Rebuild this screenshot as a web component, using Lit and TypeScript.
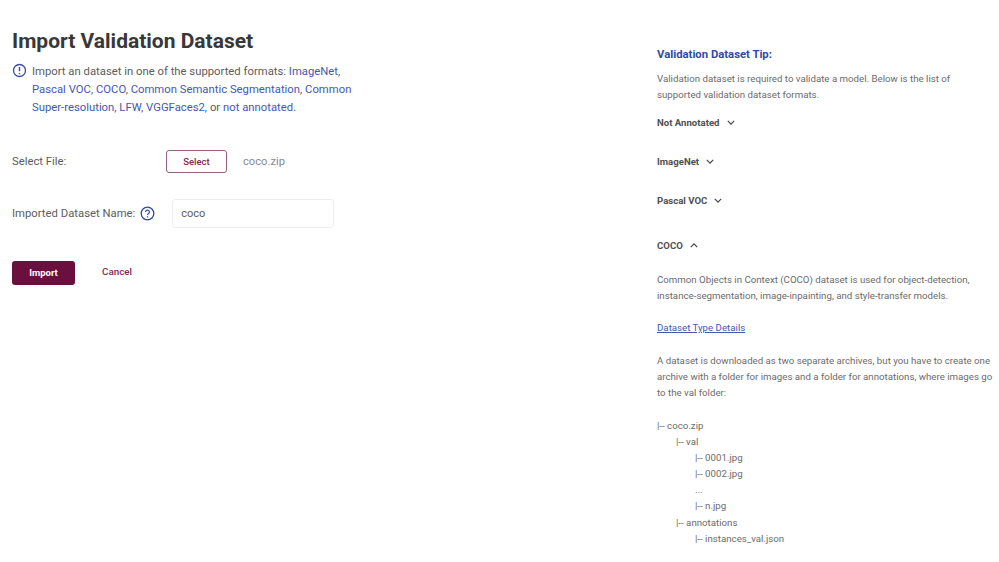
import { LitElement, html, css } from "lit";
import { customElement } from "lit/decorators.js";

const chevron = (up: boolean) => html`<svg class="chev" viewBox="0 0 10 6" width="8" height="5" aria-hidden="true"><path d=${up ? "M1 5l4-4 4 4" : "M1 1l4 4 4-4"} fill="none" stroke="#444" stroke-width="1.5"/></svg>`;

@customElement("app-root")
export class AppRoot extends LitElement {
  static styles = css`
    :host { display: block; height: 562px; overflow: hidden; background: #fff; font-family: Roboto, "Liberation Sans", sans-serif; color: #555; }
    .page { display: flex; height: 562px; }
    .left { width: 657px; flex: none; box-sizing: border-box; padding: 28px 0 0 12px; }
    h1 { margin: 0; font-size: 21px; line-height: 26px; font-weight: 700; color: #383838; }
    .note { display: flex; gap: 5px; margin-top: 8.6px; width: 345px; font-size: 11.3px; line-height: 18px; color: #5c5c5c; }
    .note svg { flex: none; margin-top: 0; }
    .note a, .right a { color: #4558ad; text-decoration: none; }
    .row { display: flex; align-items: center; font-size: 11.3px; color: #5c5c5c; }
    .file { margin-top: 33.4px; height: 23px; }
    .file .label { width: 154px; }
    .select { box-sizing: border-box; width: 61px; height: 23px; border: 1px solid #95607a; border-radius: 3px; background: #fff; color: #7a2a50; font: 500 9.5px Roboto, sans-serif; padding: 0; }
    .fname { margin-left: 16px; color: #8a8a8a; font-size: 11.2px; }
    .name { margin-top: 26px; height: 29px; }
    .name svg { margin-left: 5px; }
    .input { box-sizing: border-box; margin-left: 17px; width: 162px; height: 29px; border: 1px solid #eceff1; border-radius: 3px; padding: 0 8px; display: flex; align-items: center; font-size: 11px; color: #5c5c5c; }
    .actions { display: flex; align-items: center; margin-top: 33px; }
    .import { box-sizing: border-box; width: 63px; height: 24px; border: 0; border-radius: 3px; background: #6b0f3f; color: #fff; font: 700 9.5px Roboto, sans-serif; padding: 0; }
    .cancel { margin-left: 27px; font-size: 9.8px; font-weight: 500; color: #7a2a50; position: relative; top: -1px; }
    .right { flex: 1; min-width: 0; padding-top: 47px; font-size: 9.7px; line-height: 16px; color: #6b6b6b; }
    h2 { margin: 0; font-size: 11.3px; line-height: 16px; font-weight: 700; color: #2f4aa8; }
    p { margin: 0; }
    .intro { margin-top: 8px; width: 320px; }
    .acc { display: flex; align-items: center; gap: 7px; font-weight: 700; font-size: 9.6px; line-height: 14px; color: #505050; }
    .acc1 { margin-top: 12.5px; }
    .acc2 { margin-top: 25px; }
    .acc4 { margin-top: 31px; }
    .p1 { margin-top: 19.5px; }
    .link { display: block; margin-top: 16px; text-decoration: underline !important; }
    .p2 { margin-top: 17px; }
    .tree { margin-top: 16.6px; font-size: 9.7px; line-height: 16.15px; }
    .l2 { padding-left: 19px; }
    .l3 { padding-left: 38px; }
  `;

  render() {
    return html`<div class="page">
      <section class="left">
        <h1>Import Validation Dataset</h1>
        <div class="note">
          <svg width="15" height="15" viewBox="0 0 15 15" aria-hidden="true"><circle cx="7.5" cy="7.5" r="6" fill="none" stroke="#3f4d9c" stroke-width="1.3"/><path d="M7.5 4v4.3M7.5 10v1.2" stroke="#3f4d9c" stroke-width="1.4" fill="none"/></svg>
          <div>Import an dataset in one of the supported formats: <a>ImageNet</a>, <a>Pascal VOC</a>, <a>COCO</a>, <a>Common Semantic Segmentation</a>, <a>Common Super-resolution</a>, <a>LFW</a>, <a>VGGFaces2</a>, or <a>not annotated</a>.</div>
        </div>
        <div class="row file">
          <span class="label">Select File:</span>
          <button class="select">Select</button>
          <span class="fname">coco.zip</span>
        </div>
        <div class="row name">
          <span>Imported Dataset Name:</span>
          <svg width="15" height="15" viewBox="0 0 15 15" aria-hidden="true"><circle cx="7.5" cy="7.5" r="6.3" fill="none" stroke="#2f4a9c" stroke-width="1.3"/><path d="M5.6 6a1.9 1.9 0 1 1 2.9 1.6c-.7.4-1 .8-1 1.5" fill="none" stroke="#2f4a9c" stroke-width="1.2"/><path d="M7.5 10.2v1.2" stroke="#2f4a9c" stroke-width="1.3"/></svg>
          <div class="input">coco</div>
        </div>
        <div class="actions">
          <button class="import">Import</button>
          <span class="cancel">Cancel</span>
        </div>
      </section>
      <aside class="right">
        <h2>Validation Dataset Tip:</h2>
        <p class="intro">Validation dataset is required to validate a model. Below is the list of supported validation dataset formats.</p>
        <div class="acc acc1">Not Annotated ${chevron(false)}</div>
        <div class="acc acc2">ImageNet ${chevron(false)}</div>
        <div class="acc acc2">Pascal VOC ${chevron(false)}</div>
        <div class="acc acc4">COCO ${chevron(true)}</div>
        <p class="p1">Common Objects in Context (COCO) dataset is used for object-detection, instance-segmentation, image-inpainting, and style-transfer models.</p>
        <a class="link">Dataset Type Details</a>
        <p class="p2">A dataset is downloaded as two separate archives, but you have to create one archive with a folder for images and a folder for annotations, where images go to the val folder:</p>
        <div class="tree">
          <div>|-- coco.zip</div>
          <div class="l2">|-- val</div>
          <div class="l3">|-- 0001.jpg</div>
          <div class="l3">|-- 0002.jpg</div>
          <div class="l3">...</div>
          <div class="l3">|-- n.jpg</div>
          <div class="l2">|-- annotations</div>
          <div class="l3">|-- instances_val.json</div>
        </div>
      </aside>
    </div>`;
  }
}
